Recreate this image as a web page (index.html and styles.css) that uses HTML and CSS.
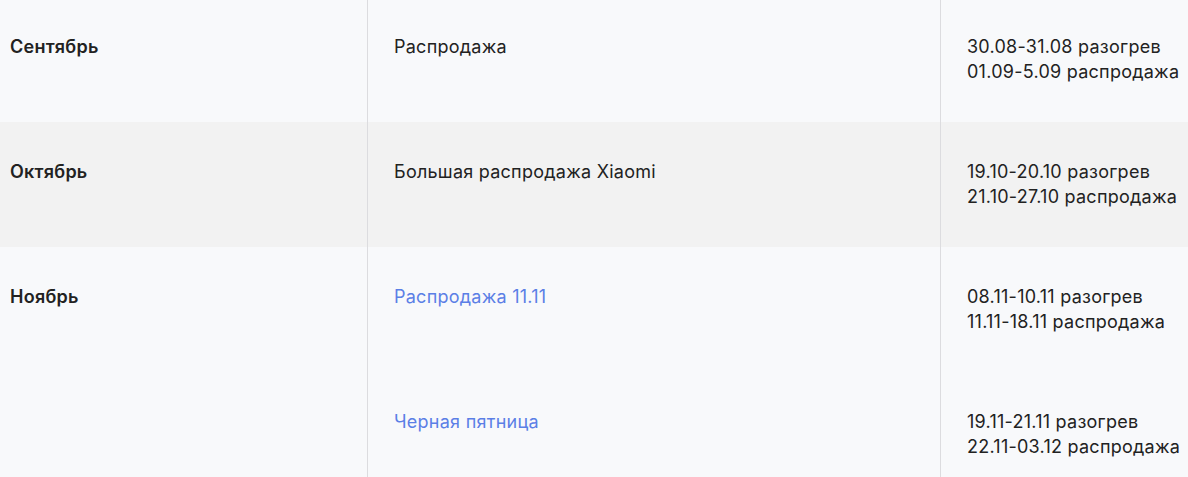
FILE: index.html
```html
<!DOCTYPE html>
<html lang="ru">
<head>
<meta charset="utf-8">
<link rel="stylesheet" href="styles.css">
</head>
<body>
<div class="table">
  <div class="row">
    <div class="month">Сентябрь</div>
    <div class="events">
      <div class="event">
        <div class="name">Распродажа</div>
        <div class="dates">30.08-31.08 разогрев<br>01.09-5.09 распродажа</div>
      </div>
    </div>
  </div>
  <div class="row alt">
    <div class="month">Октябрь</div>
    <div class="events">
      <div class="event">
        <div class="name">Большая распродажа Xiaomi</div>
        <div class="dates">19.10-20.10 разогрев<br>21.10-27.10 распродажа</div>
      </div>
    </div>
  </div>
  <div class="row">
    <div class="month">Ноябрь</div>
    <div class="events">
      <div class="event">
        <div class="name"><a href="#">Распродажа 11.11</a></div>
        <div class="dates">08.11-10.11 разогрев<br>11.11-18.11 распродажа</div>
      </div>
      <div class="event">
        <div class="name"><a href="#">Черная пятница</a></div>
        <div class="dates">19.11-21.11 разогрев<br>22.11-03.12 распродажа</div>
      </div>
    </div>
  </div>
</div>
</body>
</html>
```
FILE: styles.css
```css
html, body {
  margin: 0;
  padding: 0;
  background: #f8f9fb;
}
body {
  font-family: Inter, "Noto Sans", sans-serif;
  font-size: 18px;
  letter-spacing: 0.25px;
  line-height: 25px;
  color: #222;
  overflow: hidden;
  height: 477px;
}
.table {
  margin-top: -3px;
}
.row {
  display: grid;
  grid-template-columns: 368px 1fr;
  background: #f8f9fb;
}
.row.alt {
  background: #f2f2f2;
}
.month {
  font-weight: 600;
  padding: 37px 10px 0;
  border-right: 1px solid #dcdcdf;
}
.event {
  display: grid;
  grid-template-columns: 573px 1fr;
  height: 125px;
  box-sizing: border-box;
}
.name {
  padding: 37px 26px 0;
  border-right: 1px solid #dcdcdf;
}
.dates {
  padding: 37px 0 0 26px;
  white-space: nowrap;
}
.name a {
  color: #5b7fe6;
  text-decoration: none;
}
```
